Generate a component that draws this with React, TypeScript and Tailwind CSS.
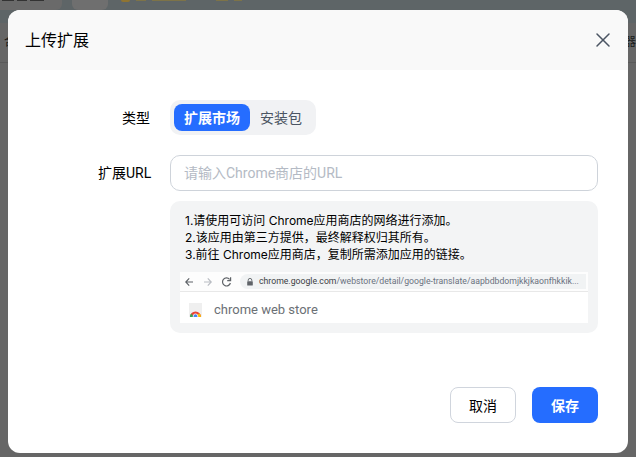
import React from "react";
import { X } from "lucide-react";

export default function App() {
  return (
    <div className="relative w-[636px] h-[457px] overflow-hidden bg-[#666666] font-['Inter','Noto_Sans_CJK_SC',sans-serif]">
      {/* dimmed page behind the dialog */}
      <div className="h-[23px] bg-[#5e6567] flex items-start">
        <div className="w-[62px] h-[10px] bg-[#6a6a6a] rounded-br-md flex items-start gap-[3px] pl-[2px]">
          <span className="w-[12px] h-[1px] bg-[#333]"></span>
          <span className="w-[10px] h-[1px] bg-[#333]"></span>
          <span className="w-[14px] h-[1px] bg-[#333]"></span>
        </div>
        <div className="ml-[10px] w-[36px] h-[10px] bg-[#6f6f6f] rounded-b-md"></div>
        <div className="ml-[13px] flex items-start gap-[6px]">
          <span className="w-[9px] h-[2px] rounded-b-full bg-[#8f7432]"></span>
          <span className="w-[10px] h-[1px] bg-[#7d7348]"></span>
          <span className="w-[34px] h-[1px] bg-[#7d7348]"></span>
          <span className="ml-[24px] w-[12px] h-[1px] bg-[#7d7348]"></span>
          <span className="w-[8px] h-[1px] bg-[#7d7348]"></span>
        </div>
      </div>
      <div className="h-[40px] border-b border-[#5a5a5a] flex items-center justify-between text-[12px] text-[#1c1c1c] pb-[1px] pl-[4px]">
        <span>合</span>
        <span>器</span>
      </div>

      <div className="absolute left-2 top-[10px] w-[620px] h-[443px] rounded-xl bg-white overflow-hidden flex flex-col">
        <div className="h-[60px] shrink-0 bg-[#f9f9f9] flex items-center justify-between pl-[17px] pr-[13px]">
          <span className="text-[16px] text-black">上传扩展</span>
          <X size={24} strokeWidth={1.5} className="text-[#4b5563]" />
        </div>

        <div className="flex-1 flex flex-col pl-[90px] pr-[30px] pt-[30px]">
          <div className="flex items-center">
            <span className="w-[52px] text-right text-[14px] text-black whitespace-nowrap">类型</span>
            <div className="ml-[20px] h-[35px] w-[146px] rounded-[10px] bg-[#f1f2f4] flex items-center pl-[4px]">
              <span className="h-[27px] w-[76px] rounded-[8px] bg-[#256dff] text-white text-[14px] font-semibold flex items-center justify-center">扩展市场</span>
              <span className="flex-1 pr-[4px] text-center text-[14px] text-[#4b5563]">安装包</span>
            </div>
          </div>

          <div className="flex items-center mt-[20px]">
            <span className="w-[52px] text-right text-[14px] text-black whitespace-nowrap font-['Roboto','Noto_Sans_CJK_SC',sans-serif]">扩展URL</span>
            <div className="ml-[20px] h-[36px] w-[428px] rounded-[10px] border border-[#ced3da] flex items-center pl-[13px] text-[14px] text-[#b4bac4] font-['Roboto','Noto_Sans_CJK_SC',sans-serif]">请输入Chrome商店的URL</div>
          </div>

          <div className="ml-[72px] mt-[10px] w-[428px] h-[132px] rounded-[10px] bg-[#f3f4f5] px-[10px] pt-[11px]">
            <div className="pl-[5px] text-[12px] leading-[17px] text-black">
              <div>1.请使用可访问 Chrome应用商店的网络进行添加。</div>
              <div>2.该应用由第三方提供，最终解释权归其所有。</div>
              <div>3.前往 Chrome应用商店，复制所需添加应用的链接。</div>
            </div>
            <div className="mt-[9px] w-[408px] h-[51px] bg-white flex flex-col">
              <div className="h-[20px] bg-[#fdfdfd] border-b border-[#e8e8e8] flex items-center pl-[5px]">
                <svg width="47" height="12" viewBox="0 0 47 12" fill="none" stroke="#5f6368" strokeWidth="1.2" className="shrink-0">
                  <path d="M8 6H0.8M4.2 2.4 0.8 6l3.4 3.6" />
                  <path d="M19 6h7.2M22.8 2.4 26.2 6l-3.4 3.6" stroke="#b9bdc3" />
                  <path d="M44.6 3.4A4 4 0 1 0 45.4 7M45.6 1.2v3.4h-3.4" />
                </svg>
                <div className="ml-[8px] flex-1 mr-[2px] h-[15px] rounded-l-full rounded-r-sm bg-[#f1f3f4] flex items-center pl-[7px] overflow-hidden">
                  <svg width="6" height="8" viewBox="0 0 6 8" className="shrink-0" fill="#5f6368">
                    <rect x="0.2" y="3.2" width="5.6" height="4.4" rx="0.6" />
                    <path d="M1.2 3.2V2.2a1.8 1.8 0 0 1 3.6 0v1" fill="none" stroke="#5f6368" strokeWidth="0.9" />
                  </svg>
                  <span className="ml-[6px] text-[8.7px] leading-none whitespace-nowrap text-[#6b7280] font-['Roboto',sans-serif]"><span className="text-[#3c4043]">chrome.google.com</span>/webstore/detail/google-translate/aapbdbdomjkkjkaonfhkkik...</span>
                </div>
              </div>
              <div className="flex-1 flex items-center pl-[8px] pt-[4px]">
                <svg width="15" height="15" viewBox="0 0 15 15" className="shrink-0">
                  <path d="M1 1h13v14H1z" fill="#efefef" />
                  <path d="M2 15a5.5 5.5 0 0 1 11 0z" fill="#ea4335" />
                  <path d="M7.5 15H13a5.5 5.5 0 0 0-1.5-3.8L9 13z" fill="#fbbc05" />
                  <path d="M2 15a5.5 5.5 0 0 1 1.2-3.4L6 15z" fill="#34a853" />
                  <circle cx="7.5" cy="14.2" r="2.3" fill="#4285f4" stroke="#fff" strokeWidth="0.8" />
                </svg>
                <span className="ml-[11px] text-[13px] text-[#6b7075] font-['Roboto',sans-serif]">chrome web store</span>
              </div>
            </div>
          </div>
        </div>

        <div className="flex justify-end gap-4 pr-[30px] pb-[30px]">
          <button className="w-[66px] h-[36px] rounded-[8px] border border-[#d0d5dd] bg-white text-[14px] text-black">取消</button>
          <button className="w-[66px] h-[36px] rounded-[8px] bg-[#256dff] text-[14px] font-semibold text-white">保存</button>
        </div>
      </div>
    </div>
  );
}
